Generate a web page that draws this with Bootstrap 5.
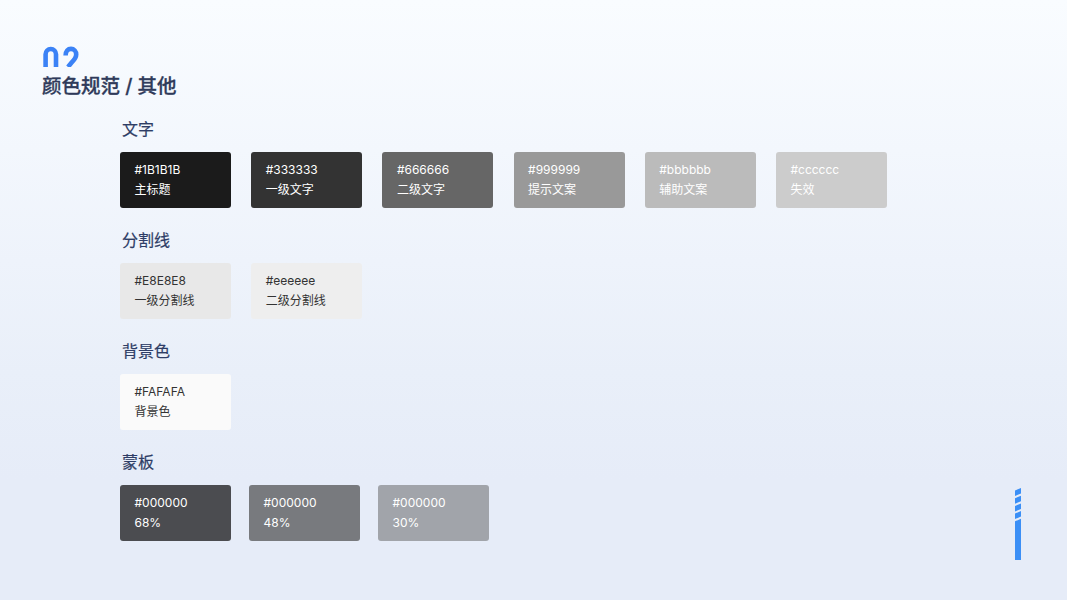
<!DOCTYPE html>
<html lang="zh"><head><meta charset="utf-8">
<title>颜色规范</title>
<link href="https://cdn.jsdelivr.net/npm/bootstrap@5.3.0/dist/css/bootstrap.min.css" rel="stylesheet">
<style>
html,body{height:100%}
body{width:1067px;height:600px;overflow:hidden;font-family:Inter,"Noto Sans CJK SC",sans-serif;background:linear-gradient(180deg,#f9fcff 0%,#f3f7fd 25%,#e9eff9 62%,#e6ecf8 80%,#e6ecf8 100%)}
.page{height:600px;padding:46px 46px 0 42px}
.logo-mark{display:block;width:36px;height:21px;margin-left:1px}
.page-title{font-size:19.500px;line-height:28px;font-weight:500;color:#2f3a5a;margin:5px 0 0 0;-webkit-text-stroke:.3px #2f3a5a}
.sheet{padding-left:78px;margin-top:18px}
.sec-title{font-size:16px;line-height:22px;font-weight:400;color:#2e3d66;margin:0 0 12px 2px;-webkit-text-stroke:.2px #2e3d66}
.sec{height:111px}
.swatch{width:111px;height:55.500px;border-radius:3px;padding:8px 0 0 14.500px;color:#fff}
.hex-line{font-size:12px;line-height:20px}
.name-line{font-size:12px;line-height:20px}
.swatch.dk{color:#333}
.gap-a{gap:20.200px}
.gap-b{gap:18px}
.accent{width:6px;height:72px}
.s1{background:#1b1b1b}.s2{background:#333}.s3{background:#666}.s4{background:#999}.s5{background:#bbb}.s6{background:#ccc}
.s7{background:#e8e8e8}.s8{background:#eee}.s9{background:#fafafa}
.m1{background:#4b4c50}.m2{background:#787a7e}.m3{background:#a1a4aa}
.foot{position:absolute;left:1014.500px;top:488px}
</style></head><body>
<div class="page position-relative">
<svg class="logo-mark" viewBox="0 0 36 21" aria-hidden="true"><g fill="none" stroke="#3b82f6" stroke-width="4.600"><path d="M2.600 21V8.200a5.200 5.200 0 0 1 10.400 0V21"/><path d="M22.600 9.500C22.600 5 25 2.900 28 2.900s5.200 2.400 5.200 5.600c0 3-1.600 5-4.200 7.600L25 21"/></g></svg>
<h1 class="page-title">颜色规范 / 其他</h1>
<div class="sheet">
<section class="sec"><h2 class="sec-title">文字</h2><div class="d-flex gap-a">
<div class="swatch s1"><div class="hex-line">#1B1B1B</div><div class="name-line">主标题</div></div>
<div class="swatch s2"><div class="hex-line">#333333</div><div class="name-line">一级文字</div></div>
<div class="swatch s3"><div class="hex-line">#666666</div><div class="name-line">二级文字</div></div>
<div class="swatch s4"><div class="hex-line">#999999</div><div class="name-line">提示文案</div></div>
<div class="swatch s5"><div class="hex-line">#bbbbbb</div><div class="name-line">辅助文案</div></div>
<div class="swatch s6"><div class="hex-line">#cccccc</div><div class="name-line">失效</div></div></div></section>
<section class="sec"><h2 class="sec-title">分割线</h2><div class="d-flex gap-a">
<div class="swatch dk s7"><div class="hex-line">#E8E8E8</div><div class="name-line">一级分割线</div></div>
<div class="swatch dk s8"><div class="hex-line">#eeeeee</div><div class="name-line">二级分割线</div></div></div></section>
<section class="sec"><h2 class="sec-title">背景色</h2><div class="d-flex gap-a">
<div class="swatch dk s9"><div class="hex-line">#FAFAFA</div><div class="name-line">背景色</div></div></div></section>
<section class="sec"><h2 class="sec-title">蒙板</h2><div class="d-flex gap-b">
<div class="swatch m1"><div class="hex-line">#000000</div><div class="hex-line">68%</div></div>
<div class="swatch m2"><div class="hex-line">#000000</div><div class="hex-line">48%</div></div>
<div class="swatch m3"><div class="hex-line">#000000</div><div class="hex-line">30%</div></div></div></section>
</div>
<svg class="foot accent" viewBox="0 0 6 72" aria-hidden="true"><g fill="#3b8ff6"><polygon points="0,2.500 6,0 6,5.500 0,8"/><polygon points="0,10.200 6,7.700 6,13.200 0,15.700"/><polygon points="0,17.900 6,15.400 6,20.900 0,23.400"/><polygon points="0,25.600 6,23.100 6,28.600 0,31.100"/><polygon points="0,33.300 6,30.800 6,72 0,72"/></g></svg>
</div>
<script src="https://cdn.jsdelivr.net/npm/bootstrap@5.3.0/dist/js/bootstrap.bundle.min.js"></script>
</body></html>
